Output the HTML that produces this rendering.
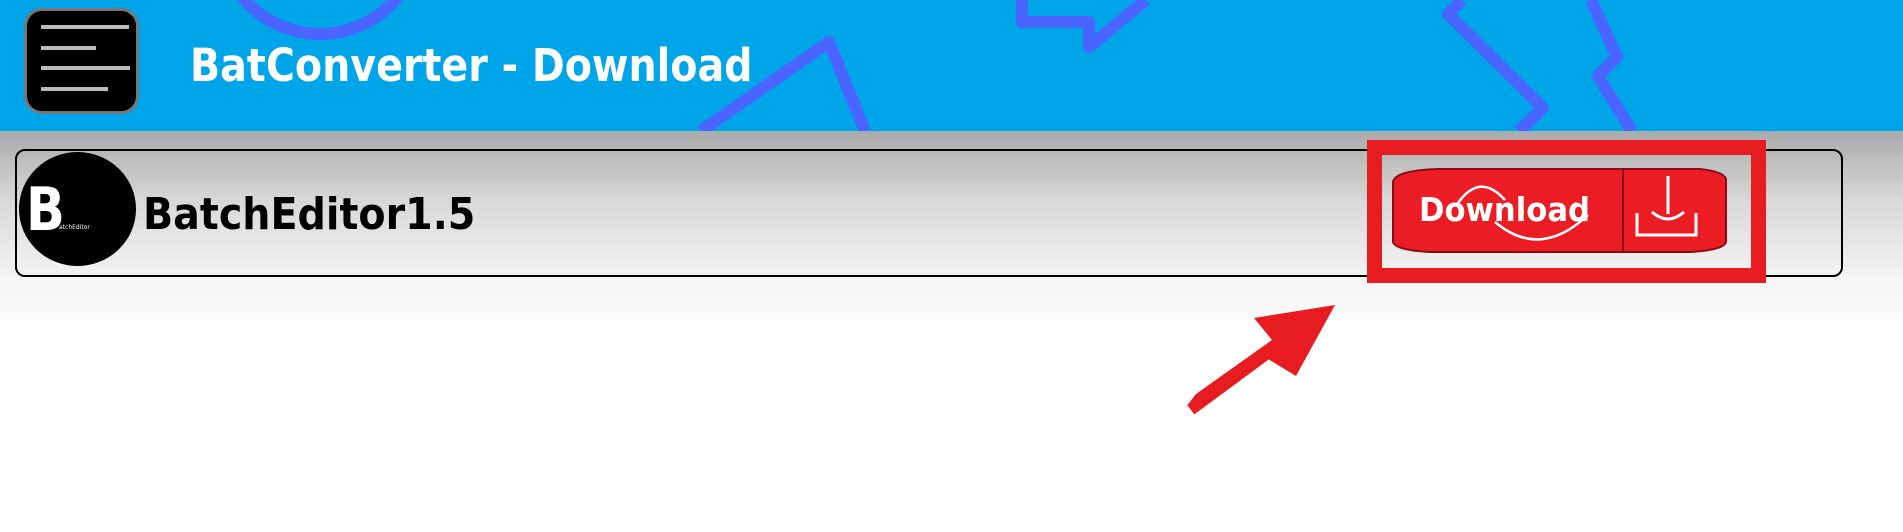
<!DOCTYPE html>
<html><head><meta charset="utf-8"><style>
html,body{margin:0;padding:0;width:1903px;height:532px;overflow:hidden;background:#fff;font-family:"DejaVu Sans","Liberation Sans",sans-serif;}
#hdr{position:absolute;left:0;top:0;width:1903px;height:131px;background:#00a4e8;overflow:hidden;}
#bg{position:absolute;left:0;top:131px;width:1903px;height:401px;background:linear-gradient(#aaa 0px,#d8d8d8 70px,#f5f5f5 150px,#fff 210px);}
#menu{position:absolute;left:24px;top:8px;width:115px;height:106px;background:#000;border:3px solid #777;border-radius:18px;box-sizing:border-box;}
#menu i{position:absolute;height:4px;background:#bbb;left:14px;}
#title{position:absolute;left:190px;top:36px;color:#fff;font-weight:bold;font-size:45px;line-height:60px;white-space:nowrap;transform:scaleX(0.88);transform-origin:0 0;}
#card{position:absolute;left:15px;top:149px;width:1828px;height:128px;border:2px solid #000;border-radius:10px;box-sizing:border-box;}
#logo{position:absolute;left:19px;top:152px;width:117px;height:114px;border-radius:50%;background:#000;}
#name{position:absolute;left:143px;top:185px;font-weight:bold;font-size:44px;line-height:60px;color:#000;white-space:nowrap;transform:scaleX(0.9);transform-origin:0 0;}
#box{position:absolute;left:1367px;top:140px;width:399px;height:143px;border:15px solid #e71c21;box-sizing:border-box;}
</style></head><body>
<div id="hdr">
<svg width="1903" height="131" style="position:absolute;left:0;top:0" fill="none" stroke="#4a64ff" stroke-width="12" stroke-linejoin="round">
<circle cx="320" cy="-66" r="100"/>
<polyline points="701,131 829,42 865,131"/>
<polyline points="1022,0 1022,22 1089,22 1089,47 1146,0"/>
<polyline points="1462,0 1448,14 1543,108 1519,131"/>
<polyline points="1591,0 1617,57 1598,76 1632,131"/>
</svg>
<div id="menu"><i style="top:14px;width:88px"></i><i style="top:35px;width:55px"></i><i style="top:55px;width:89px"></i><i style="top:76px;width:67px"></i></div>
<div id="title">BatConverter - Download</div>
</div>
<div id="bg"></div>
<div id="card"></div>
<div id="logo"><span style="position:absolute;left:7px;top:26px;color:#fff;font-weight:bold;font-size:60px;line-height:64px;transform:scaleX(0.85);transform-origin:0 0">B</span><span style="position:absolute;left:40px;top:72px;color:#fff;font-size:6px">atchEditor</span></div>
<div id="name">BatchEditor1.5</div>
<div id="box"></div>
<svg width="1903" height="532" style="position:absolute;left:0;top:0">
<path d="M1393,182 Q1395,170 1440,169 L1700,169 Q1726,172 1726,180 L1726,242 Q1724,250 1690,252 L1430,252 Q1395,250 1393,242 Z" fill="#ec1c24" stroke="#8b0c14" stroke-width="2"/>
<line x1="1623" y1="170" x2="1623" y2="252" stroke="#8b0c14" stroke-width="2"/>
<text x="1419" y="221" fill="#fff" font-family="DejaVu Sans,sans-serif" font-weight="bold" font-size="33" transform="translate(1419 0) scale(0.93 1) translate(-1419 0)">Download</text>
<path d="M1458,203 Q1480,172 1505,200 M1495,222 Q1540,260 1588,215" fill="none" stroke="#fff" stroke-width="2.5"/>
<path d="M1668,176 V214 M1652,212 Q1668,226 1684,212 M1637,213 V235 H1696 V213" fill="none" stroke="#fff" stroke-width="3"/>
<polygon points="1186,407 1260,354 1296,376 1335,305 1254,318 1272,340 1196,394" fill="#e71c21"/>
<line x1="1191" y1="410" x2="1275" y2="348" stroke="#e71c21" stroke-width="11"/>
</svg>
</body></html>
